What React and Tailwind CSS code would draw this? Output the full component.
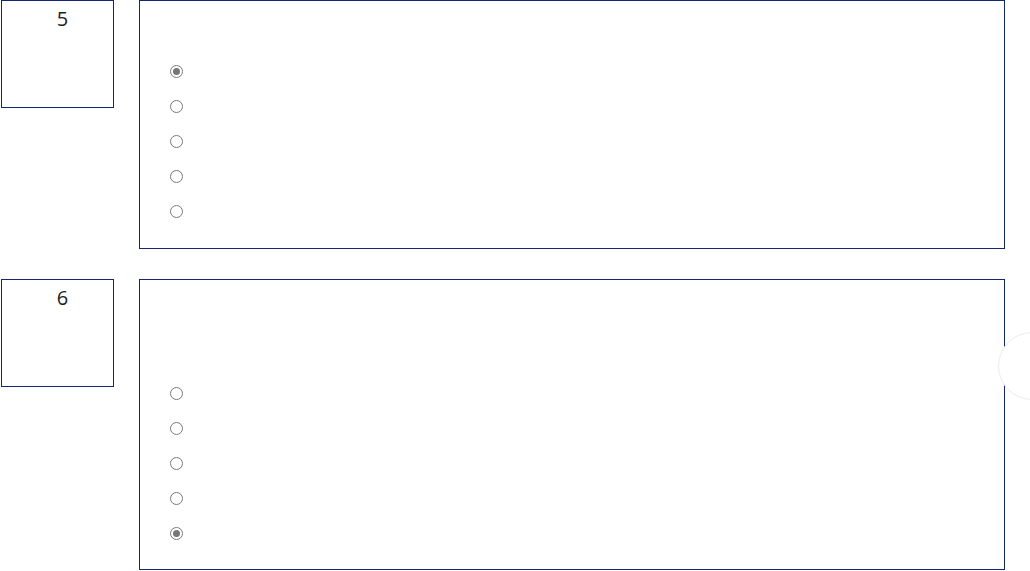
import React from 'react';

const questions = [
  { num: 5, pad: 'pt-[53px] pb-[19px]', options: 5, checked: 0 },
  { num: 6, pad: 'pt-[96px] pb-[18px]', options: 5, checked: 4 },
];

function Radio({ checked }) {
  return (
    <span className="flex h-[13px] w-[13px] items-center justify-center rounded-full border border-[#7a7a7a] bg-white">
      {checked && <span className="h-[7px] w-[7px] rounded-full bg-[#777]" />}
    </span>
  );
}

function Question({ q }) {
  return (
    <div className="flex items-start">
      {/* number box */}
      <div className="ml-px h-[108px] w-[113px] shrink-0 border border-[#12296f] bg-white pl-[10px] pt-[4px] text-center text-[20px] leading-[28px] text-[#222]">
        {q.num}
      </div>
      {/* answers panel */}
      <div className={`ml-[25px] w-[866px] shrink-0 border border-[#12296f] bg-white pl-[30px] ${q.pad}`}>
        {Array.from({ length: q.options }).map((_, i) => (
          <label key={i} className="flex h-[35px] items-center">
            <Radio checked={i === q.checked} />
          </label>
        ))}
      </div>
    </div>
  );
}

export default function App() {
  return (
    <div className="relative h-[571px] w-[1030px] overflow-hidden bg-white" style={{ fontFamily: '"Open Sans", "Noto Sans", sans-serif' }}>
      <div className="flex flex-col gap-[30px]">
        {questions.map((q) => (
          <Question key={q.num} q={q} />
        ))}
      </div>
      {/* floating round button at the right edge */}
      <div className="absolute left-[998px] top-[332px] h-[68px] w-[68px] rounded-full border border-[#ececec] bg-white" />
    </div>
  );
}
